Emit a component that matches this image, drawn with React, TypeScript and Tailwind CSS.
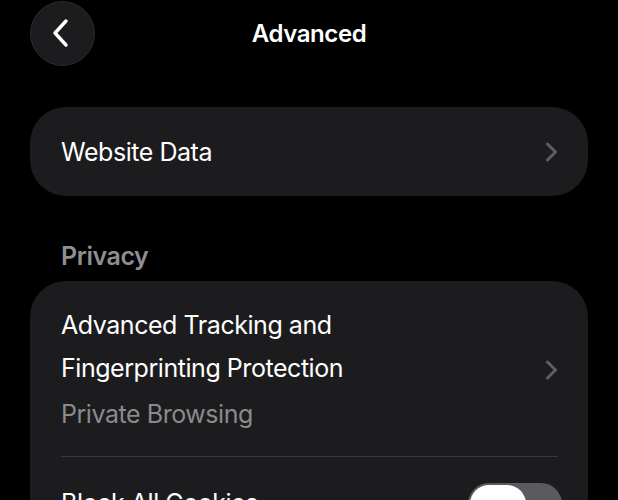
import React, { useState } from 'react';

const Chevron: React.FC = () => (
  <svg width="13" height="20" viewBox="0 0 13 20" fill="none" className="shrink-0">
    <path d="M2.5 2 L10.5 10 L2.5 18" stroke="#5e5e63" strokeWidth="3" strokeLinecap="round" strokeLinejoin="round" />
  </svg>
);

export default function App() {
  const [blockCookies, setBlockCookies] = useState(false);

  return (
    <div
      className="w-[618px] h-[500px] overflow-hidden bg-black text-white"
      style={{ fontFamily: 'Inter, "Noto Sans", sans-serif' }}
    >
      {/* header */}
      <div className="grid grid-cols-[1fr_auto_1fr] items-center h-[66px]">
        <div className="pl-[30px]">
          <button className="w-[65px] h-[65px] rounded-full bg-[#1c1c1e] border border-[#2a2a2d] flex items-center justify-center">
            <svg width="20" height="30" viewBox="0 0 20 30" fill="none" className="-ml-[3px]">
              <path d="M15 3 L4 15 L15 27" stroke="white" strokeWidth="3.4" strokeLinecap="round" strokeLinejoin="round" />
            </svg>
          </button>
        </div>
        <h1 className="text-[24px] font-semibold tracking-[-0.4px] leading-[32px] mt-[1px]">Advanced</h1>
        <div />
      </div>

      {/* website data */}
      <div className="mt-[41px] mx-[30px] h-[89px] rounded-[36px] bg-[#1c1c1e] flex items-center justify-between pl-[31px] pr-[30px]">
        <span className="text-[25px] leading-[32px] tracking-[-0.45px]">Website Data</span>
        <Chevron />
      </div>

      {/* privacy */}
      <div className="mt-[44px] px-[61px] text-[25px] leading-[32px] font-semibold text-[#8e8e93] tracking-[-0.45px]">
        Privacy
      </div>

      <div className="mt-[9px] mx-[30px] rounded-[36px] bg-[#1c1c1e] pt-[23px] h-[260px]">
        <div className="flex items-center justify-between pl-[31px] pr-[30px]">
          <div className="text-[25px] leading-[43px] tracking-[-0.45px]">
            <div>Advanced Tracking and</div>
            <div>Fingerprinting Protection</div>
            <div className="text-[#8a8a8e] mt-[3px]">Private Browsing</div>
          </div>
          <Chevron />
        </div>
        <div className="mt-[20px] ml-[31px] mr-[30px] h-px bg-[#3a3a3c]" />
        <div className="flex items-center justify-between pt-[25px] pl-[31px] pr-[26px]">
          <span className="text-[25px] leading-[43px] tracking-[-0.45px]">Block All Cookies</span>
          <button
            onClick={() => setBlockCookies(!blockCookies)}
            className={`w-[94px] h-[42px] rounded-full flex items-center px-[2px] ${
              blockCookies ? 'bg-[#30d158] justify-end' : 'bg-[#5b5a5f] justify-start'
            }`}
          >
            <span className="w-[56px] h-[38px] rounded-full bg-white" />
          </button>
        </div>
      </div>
    </div>
  );
}
